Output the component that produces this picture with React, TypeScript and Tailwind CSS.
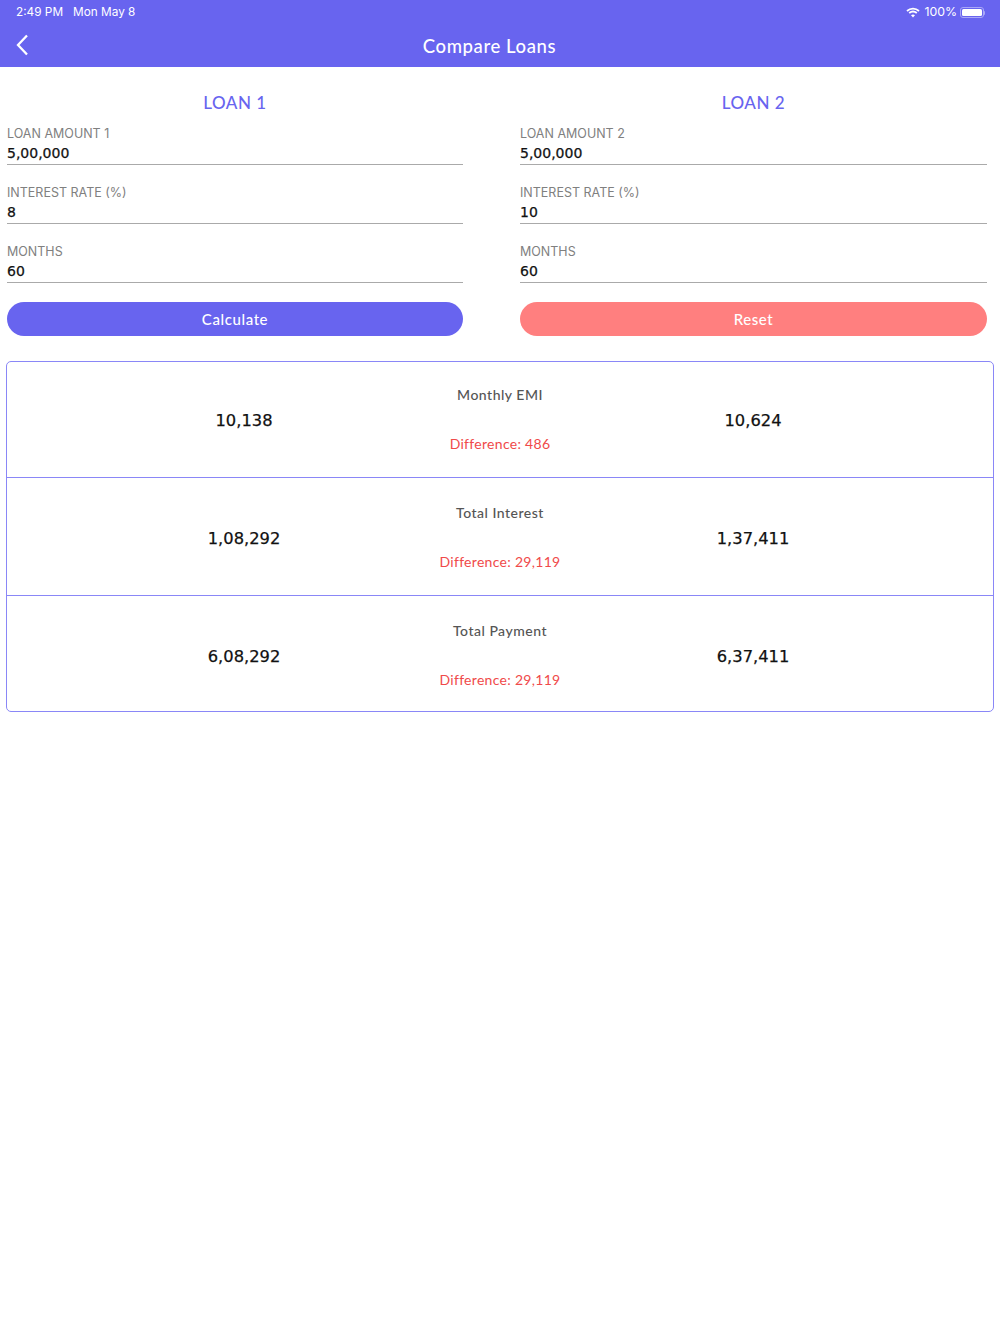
const sans = { fontFamily: 'Lato, "Noto Sans", sans-serif' };

function Field({ label, value }: { label: string; value: string }) {
  return (
    <div className="h-[59px] pt-[1px]">
      <div className="h-[22px] font-['Inter'] text-[12.5px] leading-[22px] text-[#808080]">{label}</div>
      <div className="box-content h-[17px] border-b border-[#aaaaaa] pb-[2px] font-['DejaVu_Sans'] text-[14px] leading-[17px] text-[#111111] [-webkit-text-stroke:0.25px_#111111]">
        {value}
      </div>
    </div>
  );
}

function LoanColumn({
  title,
  amountLabel,
  rate,
  button,
  color,
  width,
}: {
  title: string;
  amountLabel: string;
  rate: string;
  button: string;
  color: string;
  width: string;
}) {
  return (
    <div className={width}>
      <div className="h-[55px] pt-[23px] text-center text-[17px] leading-[26px] font-medium tracking-[0.5px] text-[#6864ef]">
        {title}
      </div>
      <Field label={amountLabel} value="5,00,000" />
      <Field label="INTEREST RATE (%)" value={rate} />
      <Field label="MONTHS" value="60" />
      <button className={`mt-[3px] block h-[34px] w-full rounded-full pt-[1px] text-center text-[15px] font-medium tracking-[0.6px] text-white ${color}`}>
        {button}
      </button>
    </div>
  );
}

function ResultRow({
  left,
  label,
  diff,
  right,
  height,
  labelTop,
  valueTop,
}: {
  left: string;
  label: string;
  diff: string;
  right: string;
  height: string;
  labelTop: string;
  valueTop: string;
}) {
  return (
    <div className={`flex pl-[137px] ${height}`}>
      <div className={`w-[200px] text-center font-['DejaVu_Sans'] text-[16.3px] leading-[24px] text-[#111111] [-webkit-text-stroke:0.25px_#111111] ${valueTop}`}>{left}</div>
      <div className="ml-[56px] w-[200px] text-center">
        <div className={`text-[14px] leading-[20px] font-medium tracking-[0.5px] text-[#555555] ${labelTop}`}>{label}</div>
        <div className="mt-[29px] text-[14px] leading-[20px] tracking-[0.3px] text-[#f04a4a]">{diff}</div>
      </div>
      <div className={`ml-[53px] w-[200px] text-center font-['DejaVu_Sans'] text-[16.3px] leading-[24px] text-[#111111] [-webkit-text-stroke:0.25px_#111111] ${valueTop}`}>{right}</div>
    </div>
  );
}

export default function App() {
  return (
    <div className="min-h-[1334px] bg-white" style={sans}>
      <div className="h-[67px] bg-[#6864ef] text-white">
        <div className="flex h-[24px] items-center justify-between pl-[16px] pr-[15px] pt-[1px] font-['Inter'] text-[11.8px]">
          <div className="flex gap-[10px]">
            <span>2:49 PM</span>
            <span>Mon May 8</span>
          </div>
          <div className="flex items-center gap-[3px]">
            <svg width="14" height="11" viewBox="0 0 14 11" fill="none" stroke="white" className="mb-[1px] mr-[1px]">
              <path d="M1 4 C4.5 0.8 9.5 0.8 13 4" strokeWidth="1.8" />
              <path d="M3.2 6 C5.4 4.2 8.6 4.2 10.8 6" strokeWidth="1.8" />
              <path d="M7 10.5 L5 8.2 C6.2 7.3 7.8 7.3 9 8.2 Z" fill="white" stroke="none" />
            </svg>
            <span className="text-[12.3px]">100%</span>
            <div className="flex items-center">
              <div className="h-[11px] w-[24px] rounded-[3px] border border-[#a9a7f7] p-[1px]">
                <div className="h-full w-full rounded-[1.5px] bg-white" />
              </div>
              <div className="h-[4px] w-[1px] rounded-r-sm bg-[#a9a7f7]" />
            </div>
          </div>
        </div>
        <div className="relative flex h-[43px] items-center pl-[15px]">
          <svg width="14" height="22" viewBox="0 0 14 22" fill="none" stroke="white" strokeWidth="2.3" className="mb-[2px]">
            <path d="M12 1.5 L3 11 L12 20.5" />
          </svg>
          <div className="absolute left-0 top-[1px] flex h-[43px] w-[979px] items-center justify-center text-[18.5px] font-medium tracking-[0.6px]">
            Compare Loans
          </div>
        </div>
      </div>

      <div className="flex pl-[7px]">
        <LoanColumn
          title="LOAN 1"
          amountLabel="LOAN AMOUNT 1"
          rate="8"
          button="Calculate"
          color="bg-[#6864ef]"
          width="w-[456px]"
        />
        <div className="ml-[57px]">
          <LoanColumn
            title="LOAN 2"
            amountLabel="LOAN AMOUNT 2"
            rate="10"
            button="Reset"
            color="bg-[#ff7f7f]"
            width="w-[467px]"
          />
        </div>
      </div>

      <div className="mx-[6px] mt-[25px] h-[351px] divide-y divide-[#8a87f7] rounded-[5px] border border-[#8a87f7]">
        <ResultRow height="h-[116px]" labelTop="pt-[23px]" valueTop="pt-[47px]" left="10,138" label="Monthly EMI" diff="Difference: 486" right="10,624" />
        <ResultRow height="h-[118px]" labelTop="pt-[25px]" valueTop="pt-[49px]" left="1,08,292" label="Total Interest" diff="Difference: 29,119" right="1,37,411" />
        <ResultRow height="h-[115px]" labelTop="pt-[25px]" valueTop="pt-[49px]" left="6,08,292" label="Total Payment" diff="Difference: 29,119" right="6,37,411" />
      </div>
    </div>
  );
}
